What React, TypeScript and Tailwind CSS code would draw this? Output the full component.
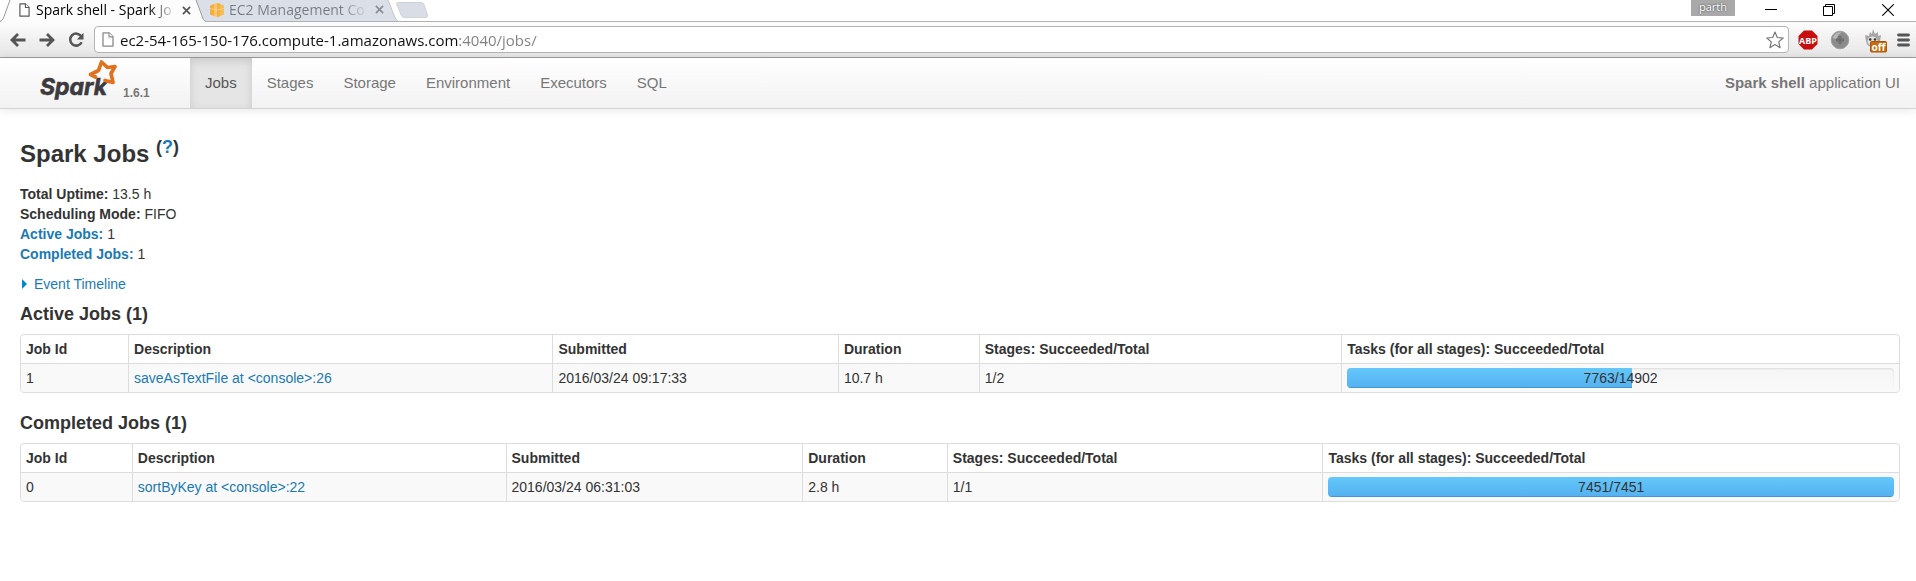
import React from "react";

type Job = {
  id: number;
  description: string;
  submitted: string;
  duration: string;
  stages: string;
  done: number;
  total: number;
};

const activeJobs: Job[] = [
  { id: 1, description: "saveAsTextFile at <console>:26", submitted: "2016/03/24 09:17:33", duration: "10.7 h", stages: "1/2", done: 7763, total: 14902 },
];

const completedJobs: Job[] = [
  { id: 0, description: "sortByKey at <console>:22", submitted: "2016/03/24 06:31:03", duration: "2.8 h", stages: "1/1", done: 7451, total: 7451 },
];

const headings = ["Job Id", "Description", "Submitted", "Duration", "Stages: Succeeded/Total", "Tasks (for all stages): Succeeded/Total"];

const activeColumns = ["w-[5.7%]", "w-[22.6%]", "w-[15.2%]", "w-[7.5%]", "w-[19.3%]", ""];
const completedColumns = ["w-[5.9%]", "w-[19.9%]", "w-[15.8%]", "w-[7.7%]", "w-[20%]", ""];

const navItems = ["Jobs", "Stages", "Storage", "Environment", "Executors", "SQL"];

const linkColor = "text-[#1a7ab5] hover:underline";

function PageIcon({ className }: { className: string }) {
  return (
    <svg viewBox="0 0 12 15" className={className} fill="#fff" strokeLinejoin="round" aria-hidden="true">
      <path d="M1 .8h6l4 4v9.4H1z" stroke="currentColor" strokeWidth="1.3" />
      <path d="M7 .8v4h4" stroke="currentColor" strokeWidth="1.2" />
    </svg>
  );
}

function CloseTab({ color }: { color: string }) {
  return (
    <svg viewBox="0 0 10 10" className={`size-[9px] ${color}`} stroke="currentColor" strokeWidth="1.9" aria-hidden="true">
      <path d="M1 1l8 8M9 1l-8 8" />
    </svg>
  );
}

function TabStrip() {
  return (
    <div className="flex h-[21px] items-start bg-white">
      <div className="relative z-10 -mb-px flex h-[22px] w-[206px] shrink-0 items-center pl-[19px]">
        <svg viewBox="0 0 206 22" preserveAspectRatio="none" className="absolute inset-0 size-full" aria-hidden="true">
          <path d="M0 22C3 21 4 17 5 14L10 0H196L202 16C203 19 204 21 206 22Z" fill="#fcfcfc" />
          <path d="M0 21.5C3 20 4 17 5 14L10 0M196 0L202 16C203 19 204 21 206 21.5" fill="none" stroke="#9a9a9a" />
        </svg>
        <PageIcon className="relative mb-0.5 h-[14px] w-[11px] text-[#5a5a5a]" />
        <a href="#jobs" className="relative mb-0.5 ml-1.5 w-[140px] bg-linear-to-r from-black from-80% to-transparent bg-clip-text text-[14px] leading-5 whitespace-nowrap text-transparent">
          Spark shell - Spark Jo
        </a>
        <button type="button" aria-label="Close tab" className="relative mb-0.5 ml-1.5">
          <CloseTab color="text-[#555]" />
        </button>
      </div>
      <div className="relative flex h-[21px] w-[192px] shrink-0 items-center pl-1">
        <svg viewBox="0 0 192 21" preserveAspectRatio="none" className="absolute inset-0 size-full overflow-visible" aria-hidden="true">
          <path d="M-10 0H182L188 15C189 18 190 20 192 21H0C-3 20 -4 16 -5 14Z" fill="#dbdfe7" />
          <path d="M182 0L188 15C189 18 190 20 192 21" fill="none" stroke="#c3c6cc" />
        </svg>
        <svg viewBox="0 0 14 14" className="relative mb-px size-[14px]" aria-hidden="true">
          <path d="M0 2.500L4 1v12L0 11.500z" fill="#f3ae3d" />
          <path d="M4 .8L7 0l3 .8v12.400L7 14l-3-.8z" fill="#f9c76a" />
          <path d="M7 0l3 .8v12.400L7 14z" fill="#f4b14a" />
          <path d="M10 1L14 2.500v9L10 13z" fill="#f7bd55" />
          <path d="M0 5.500L7 7l7-1.500" fill="none" stroke="#fbd58a" strokeWidth=".8" />
        </svg>
        <a href="#ec2" className="relative mb-0.5 ml-[5px] w-[140px] bg-linear-to-r from-[#777b82] from-80% to-transparent bg-clip-text text-[14px] leading-5 whitespace-nowrap text-transparent">
          EC2 Management Co
        </a>
        <button type="button" aria-label="Close tab" className="relative mb-0.5 ml-1.5">
          <CloseTab color="text-[#8b8e94]" />
        </button>
      </div>
      <button type="button" aria-label="New tab" className="mt-0.5 -ml-0.5">
        <svg viewBox="0 0 32 16" className="h-4 w-8" aria-hidden="true">
          <path d="M2 .5H25Q27 .5 28 2.500L31.500 13Q32 15.500 30 15.500H8Q6 15.500 5 13L.8 2.500Q.3 .5 2 .5Z" fill="#d9dde5" stroke="#cfd2d8" />
        </svg>
      </button>
      <div className="ml-auto flex items-start">
        <span className="h-4 w-11 bg-[#a9a9a9] text-center text-[11px] leading-[13px] text-white [text-shadow:0_0_2px_#333]">parth</span>
        <button type="button" aria-label="Minimize" className="mt-[3px] ml-[30px]">
          <svg viewBox="0 0 12 12" className="size-3" stroke="#000" aria-hidden="true"><path d="M0 6.500h12" /></svg>
        </button>
        <button type="button" aria-label="Restore" className="mt-1 ml-[46px]">
          <svg viewBox="0 0 12 12" className="size-3" stroke="#000" fill="none" aria-hidden="true"><path d="M.5 2.500h9v9h-9zM2.500 2.500v-2h9v9h-2" /></svg>
        </button>
        <button type="button" aria-label="Close window" className="mt-1 mr-[22px] ml-[47px]">
          <svg viewBox="0 0 12 12" className="size-3" stroke="#000" strokeWidth="1.100" aria-hidden="true"><path d="M.3 .3l11.400 11.400M11.700 .3L.3 11.700" /></svg>
        </button>
      </div>
    </div>
  );
}

function Toolbar() {
  return (
    <div className="flex h-[37px] items-center border-y border-t-[#b0b0b0] border-b-[#9c9c9c] bg-linear-to-b from-[#fcfcfc] to-[#e6e6e6] pr-1.5 pl-2.5 text-[#555]">
      <button type="button" aria-label="Back">
        <svg viewBox="0 0 16 14" className="h-[14px] w-4" fill="none" stroke="currentColor" strokeWidth="2.800" aria-hidden="true"><path d="M15.500 7H2.500M8 1L2 7l6 6" /></svg>
      </button>
      <button type="button" aria-label="Forward" className="ml-[13px]">
        <svg viewBox="0 0 16 14" className="h-[14px] w-4" fill="none" stroke="currentColor" strokeWidth="2.800" aria-hidden="true"><path d="M.5 7H13.500M8 1l6 6-6 6" /></svg>
      </button>
      <button type="button" aria-label="Reload" className="ml-[13px]">
        <svg viewBox="0 0 16 16" className="size-4" aria-hidden="true">
          <path d="M13.200 4.300A6 6 0 1 0 13.600 10.200" fill="none" stroke="currentColor" strokeWidth="2.500" />
          <path d="M15.500 .8v6.700H8.800z" fill="currentColor" />
        </svg>
      </button>
      <label className="ml-2.5 flex h-[27px] flex-1 items-center rounded-sm border border-[#b4b4b4] bg-white pr-1 pl-[7px]">
        <PageIcon className="h-[15px] w-3 text-[#8a8a8a]" />
        <input
          aria-label="Address"
          defaultValue="ec2-54-165-150-176.compute-1.amazonaws.com:4040/jobs/"
          className="ml-1.5 min-w-0 flex-1 bg-[linear-gradient(90deg,#111_338px,#808080_338px)] bg-clip-text text-[15px] leading-6 text-transparent caret-black outline-none"
        />
        <button type="button" aria-label="Bookmark this page">
          <svg viewBox="0 0 18 18" className="size-[18px]" fill="#fff" stroke="#777" strokeWidth="1.200" strokeLinejoin="round" aria-hidden="true">
            <path d="M9 1l2.300 5.500 5.900.5-4.500 3.900 1.400 5.800L9 13.600l-5.100 3.100 1.400-5.800L.8 7l5.900-.5z" />
          </svg>
        </button>
      </label>
      <button type="button" aria-label="Ad blocker" className="ml-[9px]">
        <svg viewBox="0 0 20 20" className="size-5" aria-hidden="true">
          <path d="M6 .5h8L19.500 6v8L14 19.500H6L.5 14V6z" fill="#c70d0d" />
          <text x="10" y="13.500" textAnchor="middle" fill="#fff" fontSize="9" fontWeight="700" fontFamily="Open Sans, sans-serif">ABP</text>
        </svg>
      </button>
      <button type="button" aria-label="Extension" className="ml-3">
        <svg viewBox="0 0 20 20" className="size-5" aria-hidden="true">
          <circle cx="10" cy="10" r="8.800" fill="#8c8c8c" stroke="#a0a0a0" />
          <path d="M2.500 8Q5 1.500 12 2Q8 4 7 8Q5 9.500 2.500 8Z" fill="#b8b8b8" />
          <path d="M8.500 6h3v2.500H14v3h-2.500V14h-3v-2.500H6v-3h2.500z" fill="#6e6e6e" />
        </svg>
      </button>
      <button type="button" aria-label="Proxy switch, off" className="ml-[14px]">
        <svg viewBox="0 0 24 26" className="h-[26px] w-6" aria-hidden="true">
          <path d="M2 14L1 8l4 1 1-4 2 2 1-5 2 5 3-2v4l3-1-1 6q-1 6-7 6T2 14Z" fill="#a5a5a5" />
          <ellipse cx="8.500" cy="14" rx="5" ry="4.500" fill="#e2e2e2" />
          <circle cx="6.200" cy="12.500" r="1.300" fill="#333" />
          <circle cx="11" cy="12.500" r="1.300" fill="#333" />
          <rect x="6.500" y="14.500" width="16" height="10.500" rx="1" fill="#c96a0b" stroke="#a95405" />
          <text x="14.500" y="23.500" textAnchor="middle" fill="#fff" fontSize="10" fontWeight="700" fontFamily="Open Sans, sans-serif">off</text>
        </svg>
      </button>
      <button type="button" aria-label="Menu" className="ml-[9px]">
        <svg viewBox="0 0 13 14" className="h-[14px] w-[13px]" stroke="#555" strokeWidth="2.800" strokeLinecap="round" aria-hidden="true">
          <path d="M1.500 2h10M1.500 7h10M1.500 12h10" />
        </svg>
      </button>
    </div>
  );
}

function SparkLogo() {
  return (
    <svg viewBox="0 0 80 46" className="h-[46px] w-20" role="img" aria-label="Spark">
      <text x="0" y="37" className="[font-feature-settings:'cv11']" fill="#3c3a3e" fontSize="23" fontWeight="700" fontStyle="italic" fontFamily="Inter, sans-serif" stroke="#3c3a3e" strokeWidth=".6">
        Spark
      </text>
      <path d="M55.500 19L50.500 16.500L58.500 12.500L61.500 4L67.500 9.500L75 8.500L71 15.500L73 24.500L65 22.500" fill="none" stroke="#e2711d" strokeWidth="3.700" strokeLinejoin="round" strokeLinecap="round" />
    </svg>
  );
}

function Navbar() {
  return (
    <nav className="flex h-[51px] items-stretch border-b border-[#d4d4d4] bg-linear-to-b from-white to-[#f2f2f2] pr-4 pl-10 text-[15px] text-[#777] shadow-[0_1px_10px_rgba(0,0,0,0.1)]">
      <a href="#home" className="flex w-[150px] items-start gap-[3px]">
        <SparkLogo />
        <span className="mt-[25px] text-[12px] leading-5 font-bold">1.6.1</span>
      </a>
      <ul className="flex">
        {navItems.map((item, i) => (
          <li key={item} className="flex">
            <a
              href={`#${item.toLowerCase()}`}
              className={`flex items-center px-[15px] ${i === 0 ? "bg-[#e5e5e5] text-[#555] shadow-[inset_0_3px_8px_rgba(0,0,0,0.125)]" : ""}`}
            >
              {item}
            </a>
          </li>
        ))}
      </ul>
      <p className="ml-auto self-center">
        <strong>Spark shell</strong> application UI
      </p>
    </nav>
  );
}

function TaskProgress({ done, total }: { done: number; total: number }) {
  return (
    <div className="relative h-5 overflow-hidden rounded bg-linear-to-b from-[#f5f5f5] to-[#f9f9f9] text-center shadow-[inset_0_1px_2px_rgba(0,0,0,0.1)]">
      <div
        className="absolute inset-y-0 left-0 bg-linear-to-b from-[#64c8fb] to-[#54b0ef] shadow-[inset_0_-1px_0_rgba(0,0,0,0.15)]"
        style={{ width: `${(done / total) * 100}%` }}
      />
      <span className="relative">{done}/{total}</span>
    </div>
  );
}

function JobsTable({ jobs, columns, label }: { jobs: Job[]; columns: string[]; label: string }) {
  return (
    <table aria-label={label} className="mb-5 w-full table-fixed border-separate border-spacing-0 overflow-hidden rounded border border-[#dddddd] text-left">
      <thead>
        <tr>
          {headings.map((h, i) => (
            <th key={h} scope="col" className={`border-l border-[#dddddd] px-[5px] py-1 font-bold first:border-l-0 ${columns[i]}`}>{h}</th>
          ))}
        </tr>
      </thead>
      <tbody className="[&_td]:border-t [&_td]:border-l [&_td]:border-[#dddddd] [&_td]:bg-[#f9f9f9] [&_td]:px-[5px] [&_td]:py-1 [&_td:first-child]:border-l-0">
        {jobs.map((job) => (
          <tr key={job.id}>
            <td>{job.id}</td>
            <td><a href={`#job-${job.id}`} className={linkColor}>{job.description}</a></td>
            <td>{job.submitted}</td>
            <td>{job.duration}</td>
            <td>{job.stages}</td>
            <td><TaskProgress done={job.done} total={job.total} /></td>
          </tr>
        ))}
      </tbody>
    </table>
  );
}

export default function App() {
  return (
    <div className="min-h-screen bg-white font-['Liberation_Sans',Arial,sans-serif] text-[14px] leading-5 text-[#333]">
      <header className="font-['Open_Sans','Noto_Sans',sans-serif]">
        <TabStrip />
        <Toolbar />
      </header>
      <Navbar />
      <main className="pt-[25px] pr-4 pl-5">
        <h1 className="mb-2.5 text-[24px] leading-10 font-bold">
          Spark Jobs <sup>(<a href="#help" className={linkColor}>?</a>)</sup>
        </h1>
        <ul className="mb-2.5">
          <li><strong>Total Uptime:</strong> 13.5 h</li>
          <li><strong>Scheduling Mode:</strong> FIFO</li>
          <li><a href="#active" className={linkColor}><strong>Active Jobs:</strong></a> 1</li>
          <li><a href="#completed" className={linkColor}><strong>Completed Jobs:</strong></a> 1</li>
        </ul>
        <button type="button" aria-expanded="false" className="mb-2.5 flex items-center gap-[7px] pl-0.5 text-[#1a7ab5]">
          <svg viewBox="0 0 5 10" className="h-2.5 w-[5px]" fill="#0088cc" aria-hidden="true"><path d="M0 0l5 5-5 5z" /></svg>
          Event Timeline
        </button>
        <h2 id="active" className="mb-2.5 text-[18px] leading-5 font-bold">Active Jobs (1)</h2>
        <JobsTable jobs={activeJobs} columns={activeColumns} label="Active Jobs" />
        <h2 id="completed" className="mb-2.5 text-[18px] leading-5 font-bold">Completed Jobs (1)</h2>
        <JobsTable jobs={completedJobs} columns={completedColumns} label="Completed Jobs" />
      </main>
    </div>
  );
}
